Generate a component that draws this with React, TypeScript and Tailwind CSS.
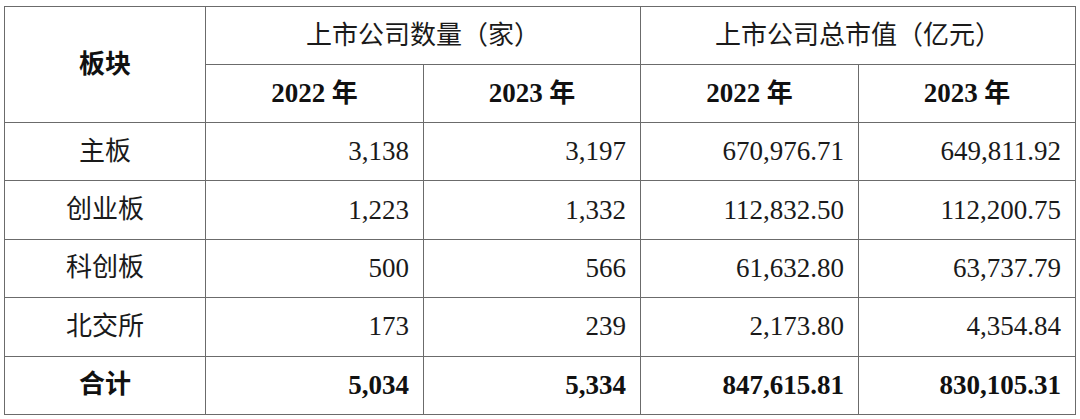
import type React from "react";

type Row = {
    name: string;
    c22: string;
    c23: string;
    v22: string;
    v23: string;
    total?: boolean;
};

const rows: Row[] = [
    { name: "主板", c22: "3,138", c23: "3,197", v22: "670,976.71", v23: "649,811.92" },
    { name: "创业板", c22: "1,223", c23: "1,332", v22: "112,832.50", v23: "112,200.75" },
    { name: "科创板", c22: "500", c23: "566", v22: "61,632.80", v23: "63,737.79" },
    { name: "北交所", c22: "173", c23: "239", v22: "2,173.80", v23: "4,354.84" },
    { name: "合计", c22: "5,034", c23: "5,334", v22: "847,615.81", v23: "830,105.31", total: true },
];

const cjk = "[font-family:'Liberation_Serif','Noto_Sans_CJK_SC',serif] text-[26px]";
const num = "[font-family:'Liberation_Serif',serif] text-[27px]";
const cell = "border border-[#6b6b6b] p-0";

const Year: React.FC<{ y: string }> = ({ y }) => (
    <span className="font-bold text-[#111]">
        <span className={num}>{y}</span>
        <span className={cjk}> 年</span>
    </span>
);

const App: React.FC = () => {
    return (
        <div className="w-[1080px] h-[419px] bg-white pt-[6px] pl-[4px]">
            <table className="border-collapse table-fixed w-[1071px] text-[#1a1a1a] leading-none">
                <colgroup>
                    <col className="w-[201px]" />
                    <col className="w-[218px]" />
                    <col className="w-[217px]" />
                    <col className="w-[218px]" />
                    <col className="w-[217px]" />
                </colgroup>
                <thead>
                    <tr className="h-[58px]">
                        <th rowSpan={2} className={`${cell} ${cjk} font-bold text-[#111]`}>板块</th>
                        <th colSpan={2} className={`${cell} ${cjk} font-normal`}>上市公司数量（家）</th>
                        <th colSpan={2} className={`${cell} ${cjk} font-normal`}>上市公司总市值（亿元）</th>
                    </tr>
                    <tr className="h-[58px]">
                        <th className={cell}><Year y="2022" /></th>
                        <th className={cell}><Year y="2023" /></th>
                        <th className={cell}><Year y="2022" /></th>
                        <th className={cell}><Year y="2023" /></th>
                    </tr>
                </thead>
                <tbody>
                    {rows.map((r) => (
                        <tr key={r.name} className="h-[58.4px]">
                            <td className={`${cell} ${cjk} text-center ${r.total ? "font-bold text-[#111]" : ""}`}>
                                {r.name}
                            </td>
                            {[r.c22, r.c23, r.v22, r.v23].map((v, i) => (
                                <td
                                    key={i}
                                    className={`${cell} ${num} text-right pr-[14px] ${r.total ? "font-bold text-[#111]" : ""}`}
                                >
                                    {v}
                                </td>
                            ))}
                        </tr>
                    ))}
                </tbody>
            </table>
        </div>
    );
};

export default App;
